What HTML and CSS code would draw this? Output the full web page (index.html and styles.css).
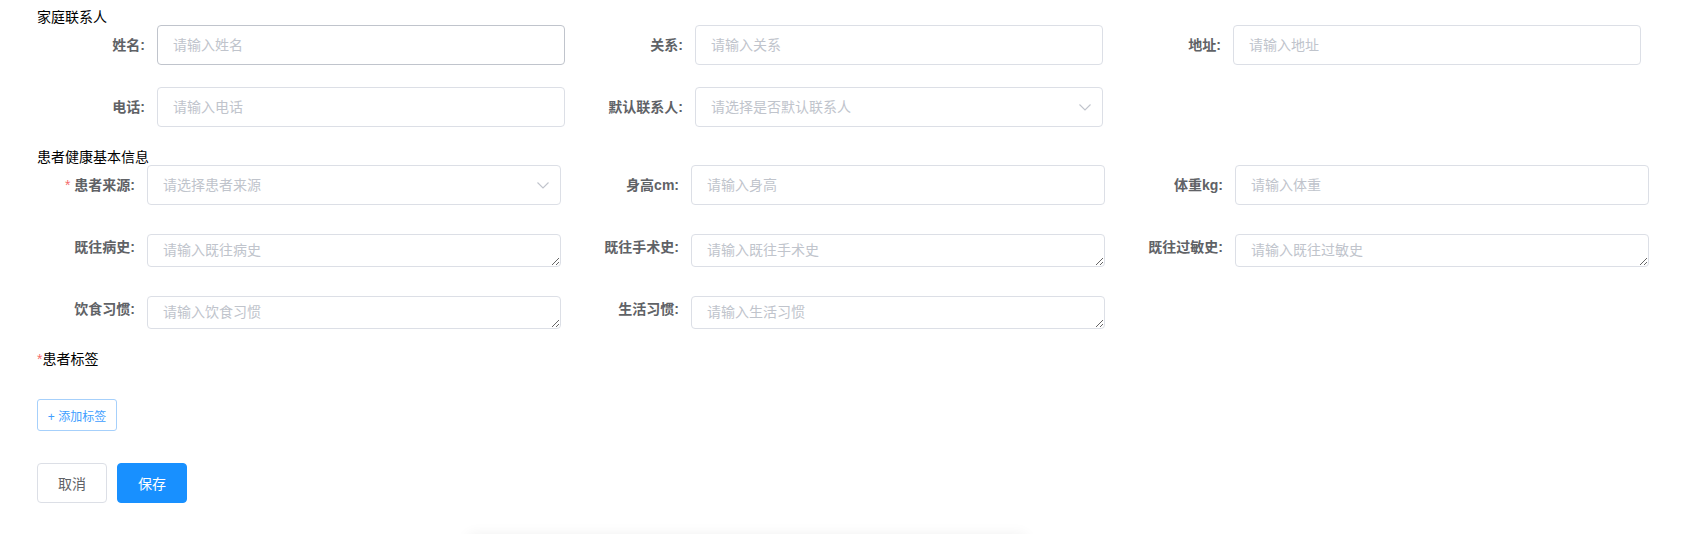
FILE: index.html
```html
<!DOCTYPE html>
<html lang="zh-CN">
<head>
<meta charset="utf-8">
<title>患者信息</title>
<link rel="stylesheet" href="styles.css">
</head>
<body>
<div class="page">
  <div class="section-title first">家庭联系人</div>
  <div class="grid grid-contact">
    <div class="item"><label class="label">姓名:</label><div class="control"><input class="input hover" placeholder="请输入姓名"></div></div>
    <div class="item"><label class="label">关系:</label><div class="control"><input class="input" placeholder="请输入关系"></div></div>
    <div class="item"><label class="label">地址:</label><div class="control"><input class="input" placeholder="请输入地址"></div></div>
    <div class="item"><label class="label">电话:</label><div class="control"><input class="input" placeholder="请输入电话"></div></div>
    <div class="item"><label class="label">默认联系人:</label><div class="control select"><input class="input" readonly placeholder="请选择是否默认联系人"><svg class="arrow" viewBox="0 0 14 14" width="14" height="14"><path d="M1.5 4.5 L7 10 L12.5 4.5" fill="none" stroke="#c0c4cc" stroke-width="1.1"/></svg></div></div>
  </div>

  <div class="section-title">患者健康基本信息</div>
  <div class="grid grid-health">
    <div class="item"><label class="label"><span class="req">*</span>患者来源:</label><div class="control select"><input class="input" readonly placeholder="请选择患者来源"><svg class="arrow" viewBox="0 0 14 14" width="14" height="14"><path d="M1.5 4.5 L7 10 L12.5 4.5" fill="none" stroke="#c0c4cc" stroke-width="1.1"/></svg></div></div>
    <div class="item"><label class="label">身高cm:</label><div class="control"><input class="input" placeholder="请输入身高"></div></div>
    <div class="item"><label class="label">体重kg:</label><div class="control"><input class="input" placeholder="请输入体重"></div></div>
    <div class="item"><label class="label">既往病史:</label><div class="control bottom"><textarea class="textarea" placeholder="请输入既往病史"></textarea></div></div>
    <div class="item"><label class="label">既往手术史:</label><div class="control bottom"><textarea class="textarea" placeholder="请输入既往手术史"></textarea></div></div>
    <div class="item"><label class="label">既往过敏史:</label><div class="control bottom"><textarea class="textarea" placeholder="请输入既往过敏史"></textarea></div></div>
    <div class="item"><label class="label">饮食习惯:</label><div class="control bottom"><textarea class="textarea" placeholder="请输入饮食习惯"></textarea></div></div>
    <div class="item"><label class="label">生活习惯:</label><div class="control bottom"><textarea class="textarea" placeholder="请输入生活习惯"></textarea></div></div>
  </div>

  <div class="section-title tags-title"><span class="star">*</span>患者标签</div>
  <button class="btn-tag">+ 添加标签</button>

  <div class="actions">
    <button class="btn btn-default">取消</button>
    <button class="btn btn-primary">保存</button>
  </div>
  <div class="shadow-strip"></div>
</div>
</body>
</html>
```

FILE: styles.css
```css
* { box-sizing: border-box; }
html, body { margin: 0; padding: 0; background: #fff; }
body {
  font-family: "Liberation Sans", "Noto Sans CJK SC", "Microsoft YaHei", sans-serif;
  font-size: 14px;
  color: #000;
  overflow: hidden;
}
.page {
  padding-left: 37px;
}
.section-title {
  height: 16px;
  line-height: 17px;
  font-size: 14px;
  color: #000;
  white-space: nowrap;
}
.section-title.first { margin-top: 9px; }

.grid {
  display: grid;
  row-gap: 22px;
}
.grid-contact {
  grid-template-columns: repeat(3, 528px);
  column-gap: 10px;
  margin-bottom: 22px;
}
.grid-contact .label { width: 120px; }
.grid-health {
  grid-template-columns: repeat(3, 524px);
  column-gap: 20px;
  margin-bottom: 22px;
}
.grid-health .label { width: 110px; }

.item {
  display: flex;
  height: 40px;
}
.label {
  flex: none;
  text-align: right;
  padding-right: 12px;
  line-height: 40px;
  font-size: 14px;
  font-weight: 700;
  color: #606266;
  white-space: nowrap;
}
.req {
  color: #f56c6c;
  margin-right: 4px;
  font-weight: 400;
}
.control {
  flex: 1;
  position: relative;
  display: flex;
}
.control.bottom { align-items: flex-end; }

.input {
  width: 100%;
  height: 40px;
  border: 1px solid #dcdfe6;
  border-radius: 4px;
  padding: 0 15px;
  font-family: inherit;
  font-size: 14px;
  color: #606266;
  outline: none;
  background: #fff;
}
.input.hover { border-color: #c0c4cc; }
.select .input { padding-right: 30px; cursor: pointer; }
.input::placeholder, .textarea::placeholder { color: #c0c4cc; }

.arrow {
  position: absolute;
  right: 11px;
  top: 13px;
}

.textarea {
  width: 100%;
  height: 33px;
  border: 1px solid #dcdfe6;
  border-radius: 4px;
  padding: 5px 15px;
  font-family: inherit;
  font-size: 14px;
  line-height: 21px;
  color: #606266;
  resize: vertical;
  outline: none;
  display: block;
  background: #fff;
}

.tags-title { height: 17px; }
.star { color: #f56c6c; }

.btn-tag {
  display: block;
  margin-top: 31px;
  width: 80px;
  height: 32px;
  padding: 0;
  border: 1px solid #a6d0fb;
  border-radius: 3px;
  background: #fff;
  color: #409eff;
  font-family: inherit;
  font-size: 12px;
}

.actions {
  display: flex;
  gap: 10px;
  margin-top: 32px;
}
.btn {
  height: 40px;
  width: 70px;
  padding: 0;
  border-radius: 4px;
  font-family: inherit;
  font-size: 14px;
}
.btn-default {
  border: 1px solid #dcdfe6;
  background: #fff;
  color: #606266;
}
.btn-primary {
  border: 1px solid #1890ff;
  background: #1890ff;
  color: #fff;
}

.shadow-strip {
  margin-top: 31px;
  margin-left: 430px;
  width: 560px;
  height: 30px;
  border-radius: 6px;
  box-shadow: 0 0 14px rgba(0, 0, 0, 0.06);
}
```
